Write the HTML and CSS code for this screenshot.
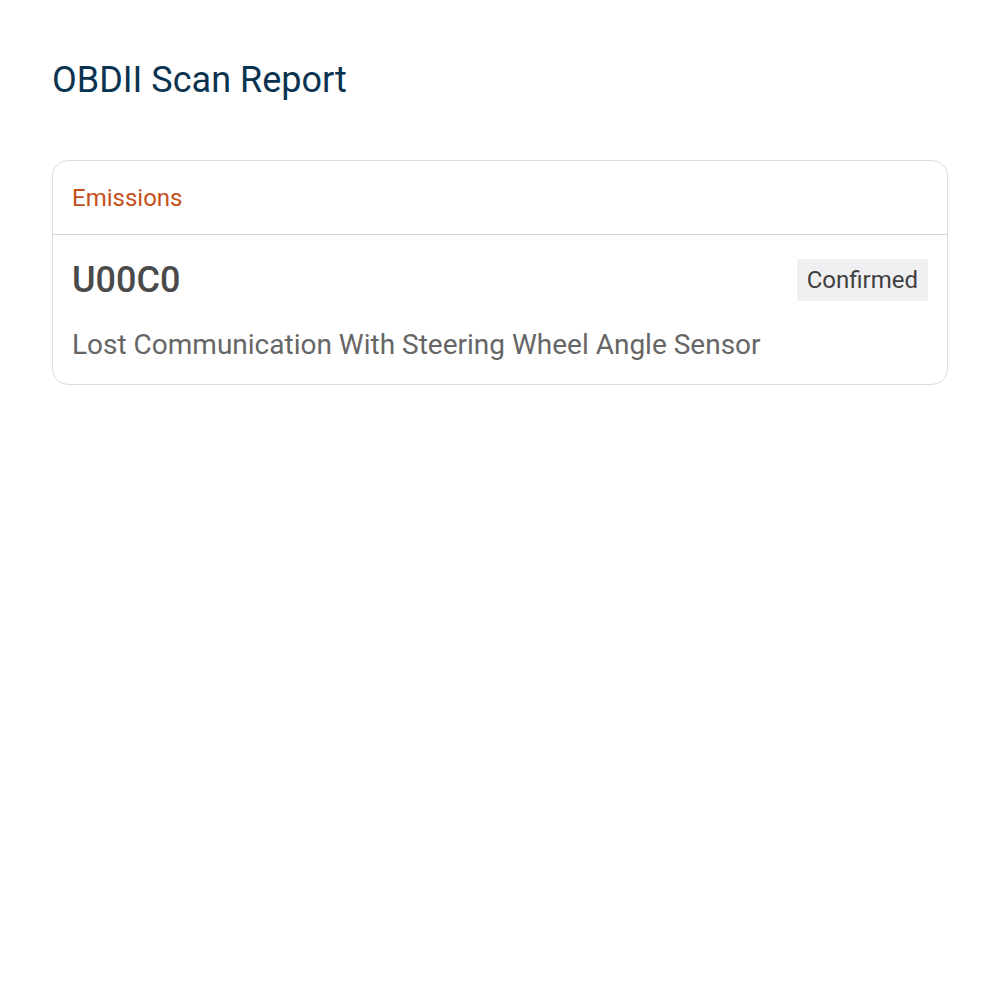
FILE: index.html
```html
<!DOCTYPE html>
<html lang="en">
<head>
<meta charset="utf-8">
<title>OBDII Scan Report</title>
<link rel="stylesheet" href="styles.css">
</head>
<body>
<main class="report">
  <h1 class="report-title">OBDII Scan Report</h1>
  <section class="card">
    <header class="card-header">Emissions</header>
    <div class="card-body">
      <div class="code-row">
        <span class="code">U00C0</span>
        <span class="badge">Confirmed</span>
      </div>
      <p class="description">Lost Communication With Steering Wheel Angle Sensor</p>
    </div>
  </section>
</main>
</body>
</html>
```
FILE: styles.css
```css
html, body {
  margin: 0;
  padding: 0;
  background: #ffffff;
}

body {
  font-family: Roboto, "Noto Sans", Arial, sans-serif;
}

.report {
  padding: 56px 52px;
}

.report-title {
  margin: 0 0 56px;
  font-size: 36px;
  line-height: 48px;
  font-weight: 400;
  color: #0a3350;
}

.card {
  border: 1px solid #dcdcdc;
  border-radius: 16px;
}

.card-header {
  padding: 0 19px;
  height: 73px;
  display: flex;
  align-items: center;
  font-size: 24px;
  color: #c4501a;
  border-bottom: 1px solid #d4d4d4;
}

.card-body {
  padding: 23px 19px 22px;
}

.code-row {
  display: flex;
  align-items: center;
  justify-content: space-between;
}

.code {
  font-size: 36px;
  line-height: 44px;
  font-weight: 500;
  color: #4a4a4a;
}

.badge {
  background: #f0f0f2;
  color: #404040;
  font-size: 24px;
  line-height: 28px;
  padding: 7px 10px;
}

.description {
  margin: 26px 0 0;
  font-size: 28px;
  line-height: 34px;
  color: #666666;
}
```
